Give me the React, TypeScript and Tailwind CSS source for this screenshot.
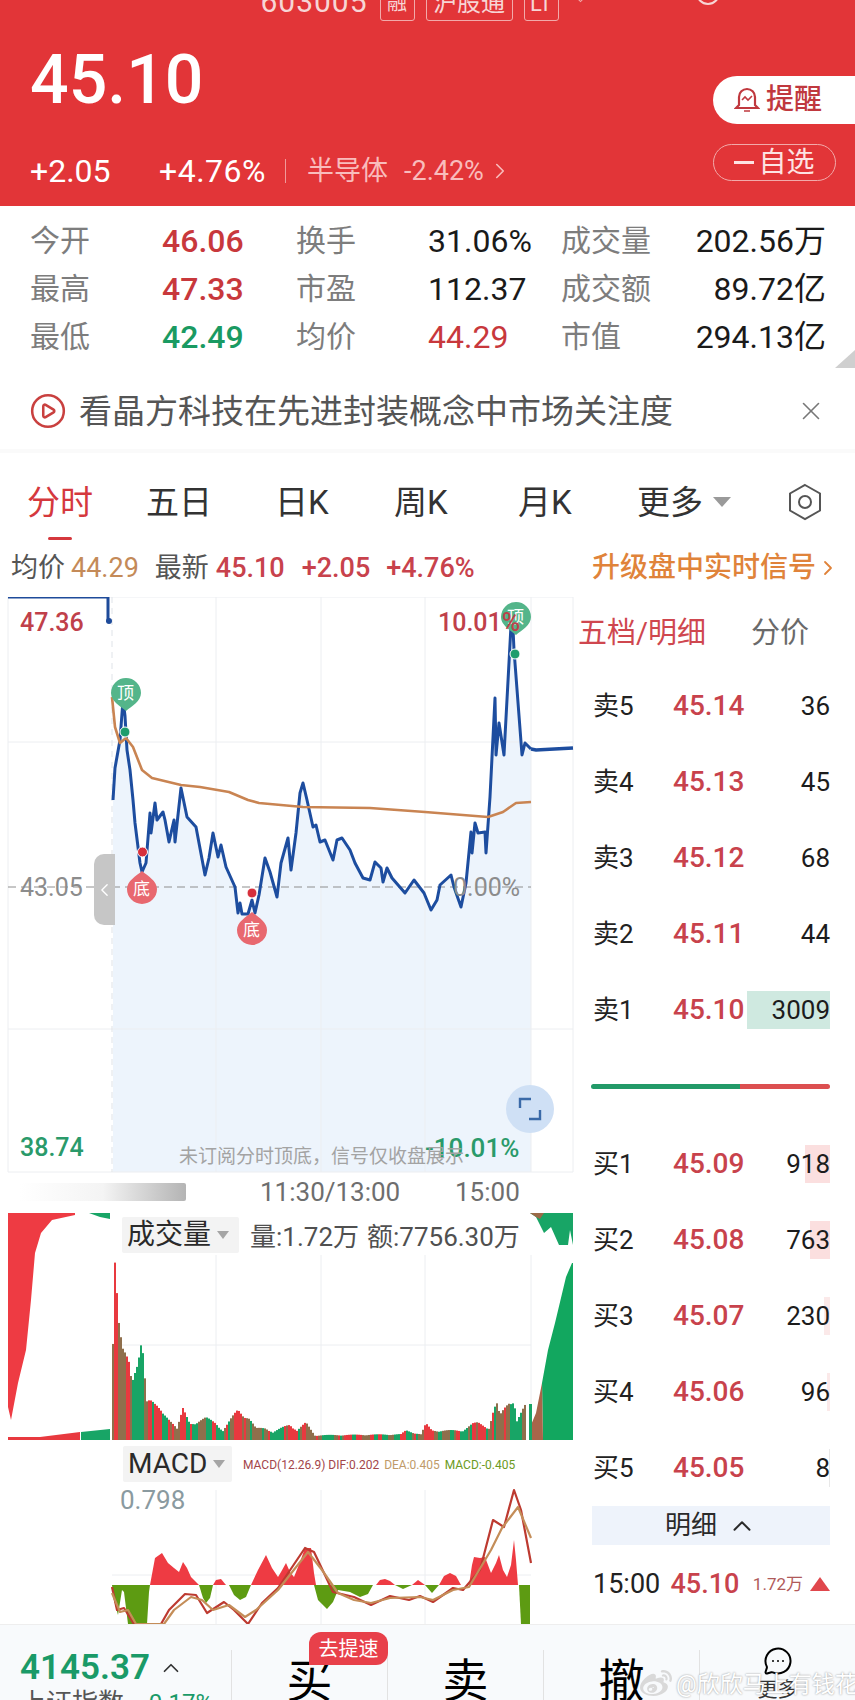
import { ChevronLeft, ChevronRight, ChevronUp, CirclePlay, MessageCircleMore, X } from "lucide-react";
import { FaWeibo } from "react-icons/fa";

type Pt = [number, number];

const font = { fontFamily: 'Roboto, "Noto Sans CJK SC", sans-serif' };

const stats = [
  [
    { label: "今开", value: "46.06", color: "text-[#c8383c]" },
    { label: "换手", value: "31.06%", color: "text-[#1a1a1a]" },
    { label: "成交量", value: "202.56万", color: "text-[#1a1a1a]" },
  ],
  [
    { label: "最高", value: "47.33", color: "text-[#c8383c]" },
    { label: "市盈", value: "112.37", color: "text-[#1a1a1a]" },
    { label: "成交额", value: "89.72亿", color: "text-[#1a1a1a]" },
  ],
  [
    { label: "最低", value: "42.49", color: "text-[#1a9a62]" },
    { label: "均价", value: "44.29", color: "text-[#c8383c]" },
    { label: "市值", value: "294.13亿", color: "text-[#1a1a1a]" },
  ],
];

const tabs = [
  { label: "分时", cls: "w-[119px] text-[#d5383d]" },
  { label: "五日", cls: "w-[129px]" },
  { label: "日K", cls: "w-[119px]" },
  { label: "周K", cls: "w-[124px]" },
  { label: "月K", cls: "w-[119px]" },
];

const sells = [
  { name: "卖5", price: "45.14", qty: "36" },
  { name: "卖4", price: "45.13", qty: "45" },
  { name: "卖3", price: "45.12", qty: "68" },
  { name: "卖2", price: "45.11", qty: "44" },
  { name: "卖1", price: "45.10", qty: "3009", bar: "w-[83px] bg-[#cfe9e0]" },
];

const buys = [
  { name: "买1", price: "45.09", qty: "918", bar: "w-[25px] bg-[#fbdfdf]" },
  { name: "买2", price: "45.08", qty: "763", bar: "w-[20px] bg-[#fbdfdf]" },
  { name: "买3", price: "45.07", qty: "230", bar: "w-[6px] bg-[#fbe9e9]" },
  { name: "买4", price: "45.06", qty: "96", bar: "w-[3px] bg-[#fbe9e9]" },
  { name: "买5", price: "45.05", qty: "8", bar: "w-[1px] bg-[#e8e8e8]" },
];

const price: Pt[] = [
  [113, 800], [115, 768], [120, 740], [123, 700], [125, 716], [127, 750], [130, 770], [133, 800], [135, 823], [140, 863], [142, 872], [146, 863],
  [150, 813], [151, 833], [155, 803], [157, 820], [163, 812], [165, 820], [169, 842], [174, 820], [175, 842], [181, 788], [187, 817], [196, 827],
  [205, 875], [209, 858], [213, 833], [218, 857], [221, 845], [226, 867], [235, 887], [238, 913], [240, 903], [242, 914], [248, 914], [252, 900],
  [255, 913], [259, 895], [265, 858], [270, 872], [277, 897], [281, 863], [288, 838], [291, 870], [296, 833], [300, 793], [303, 783], [307, 800],
  [313, 827], [316, 825], [320, 842], [325, 840], [333, 860], [337, 840], [342, 838], [350, 850], [355, 863], [363, 878], [370, 880], [375, 862],
  [381, 868], [383, 882], [387, 868], [392, 878], [405, 893], [414, 880], [424, 893], [431, 910], [437, 900], [440, 885], [451, 875], [454, 887],
  [461, 907], [466, 883], [471, 832], [472, 853], [475, 823], [478, 833], [485, 832], [486, 853], [490, 797], [495, 698], [496, 755], [499, 723],
  [504, 755], [512, 607], [514, 650], [522, 755], [525, 743], [531, 749],
];
const priceTail: Pt[] = [[531, 749], [536, 750], [573, 748]];

const avg: Pt[] = [
  [112, 697], [115, 727], [120, 743], [126, 738], [133, 747], [142, 770], [152, 778], [181, 785], [200, 787], [229, 792], [248, 800], [259, 803],
  [303, 807], [370, 808], [425, 812], [488, 817], [503, 812], [516, 803], [531, 802],
];

const volumeEnvelope: Pt[] = [
  [112, 97], [114, 183], [118, 130], [124, 100], [128, 82], [131, 57], [137, 77], [141, 108], [146, 47], [149, 45], [154, 37], [162, 27], [170, 22],
  [176, 12], [182, 32], [189, 17], [205, 23], [215, 18], [222, 10], [237, 32], [248, 23], [255, 12], [265, 13], [272, 8], [289, 17], [296, 10], [305, 18],
  [314, 5], [400, 6], [405, 10], [420, 6], [425, 17], [431, 10], [461, 10], [472, 17], [477, 18], [488, 13], [493, 33], [496, 37], [499, 25], [509, 43],
  [513, 43], [516, 20], [525, 37],
];

const dif: Pt[] = [
  [112, 1587], [117, 1610], [124, 1608], [134, 1624], [161, 1624], [169, 1610], [185, 1594], [196, 1595], [207, 1613], [224, 1602], [234, 1610], [248, 1624],
  [262, 1603], [278, 1588], [305, 1548], [314, 1552], [333, 1592], [354, 1597], [371, 1605], [390, 1596], [409, 1600], [420, 1596], [433, 1602], [453, 1588],
  [463, 1590], [480, 1570], [493, 1520], [504, 1527], [514, 1490], [521, 1510], [531, 1563],
];
const dea: Pt[] = [
  [112, 1593], [120, 1612], [128, 1610], [136, 1624], [164, 1624], [174, 1610], [191, 1597], [202, 1600], [213, 1610], [229, 1605], [245, 1617], [256, 1610],
  [278, 1590], [308, 1552], [322, 1570], [338, 1593], [354, 1600], [371, 1603], [390, 1598], [420, 1597], [433, 1600], [453, 1590], [469, 1587], [491, 1550],
  [502, 1528], [518, 1507], [531, 1538],
];

const macdRed: Pt[][] = [
  [[150, 1585], [155, 1558], [162, 1553], [168, 1563], [174, 1568], [179, 1572], [183, 1562], [187, 1568], [191, 1577], [199, 1585]],
  [[213, 1585], [216, 1580], [221, 1579], [226, 1585]],
  [[251, 1585], [258, 1570], [266, 1555], [272, 1568], [278, 1577], [281, 1572], [286, 1563], [290, 1572], [294, 1577], [300, 1562], [305, 1548], [311, 1548], [314, 1573], [316, 1585]],
  [[376, 1585], [380, 1580], [385, 1579], [390, 1581], [395, 1585]],
  [[412, 1585], [418, 1580], [425, 1585]],
  [[439, 1585], [444, 1576], [450, 1573], [456, 1576], [461, 1585]],
  [[469, 1585], [472, 1565], [474, 1557], [480, 1558], [485, 1557], [491, 1573], [496, 1563], [499, 1555], [503, 1570], [507, 1577], [511, 1565], [514, 1540], [516, 1560], [518, 1585]],
];
const macdGreen: Pt[][] = [
  [[112, 1585], [114, 1600], [118, 1615], [122, 1590], [124, 1592], [128, 1624], [147, 1624], [149, 1592], [150, 1585]],
  [[199, 1585], [203, 1598], [206, 1603], [210, 1598], [213, 1585]],
  [[229, 1585], [234, 1595], [240, 1600], [246, 1597], [251, 1585]],
  [[314, 1585], [318, 1600], [327, 1609], [333, 1602], [338, 1590], [350, 1592], [360, 1597], [368, 1594], [373, 1585]],
  [[395, 1585], [403, 1589], [412, 1585]],
  [[425, 1585], [432, 1593], [439, 1585]],
  [[519, 1585], [521, 1624], [530, 1624], [530, 1585]],
];

const toLine = (pts: Pt[]) => pts.map((p, i) => `${i ? "L" : "M"}${p[0]} ${p[1]}`).join(" ");
const toPoly = (pts: Pt[]) => pts.map((p) => p.join(",")).join(" ");

function volumeBars() {
  const bars: { x: number; h: number; color: string }[] = [];
  for (let x = 112; x < 526; x += 2) {
    let h = 5;
    for (let i = 0; i < volumeEnvelope.length - 1; i++) {
      const a = volumeEnvelope[i];
      const b = volumeEnvelope[i + 1];
      if (x >= a[0] && x <= b[0]) h = a[1] + ((b[1] - a[1]) * (x - a[0])) / (b[0] - a[0]);
    }
    const jitter = 0.82 + 0.18 * Math.abs(Math.sin(x * 1.7));
    const band = Math.floor(x / 9) + Math.floor(Math.sin(x / 6) * 2);
    const mod = ((band % 3) + 3) % 3;
    bars.push({ x, h: h * jitter, color: mod === 0 ? "#e8393f" : mod === 1 ? "#18a566" : "#8f6f4c" });
  }
  return bars;
}

function ChartCanvas() {
  const area = `${toLine(price)} L531 1172 L113 1172 Z`;
  return (
    <div className="relative h-[1027px] w-[578px] shrink-0">
      <svg className="block" width="578" height="1027" viewBox="0 597 578 1027" fill="none">
        <path d={area} fill="#edf4fc" />
        <g stroke="#eceef1" strokeWidth="1">
          <path d="M8 597H573M8 742H573M8 1029H573M8 1172H573" />
          <path d="M8 597V1172M216 597V1172M321 597V1172M425 597V1172M531 597V1172M573 597V1172" />
          <path d="M216 1255V1440M321 1255V1440M425 1255V1440M531 1255V1440M112 1345H531" />
          <path d="M216 1490V1624M321 1490V1624M425 1490V1624M112 1575H531" />
        </g>
        <path d="M112 597V1172" stroke="#dfe3e8" strokeDasharray="6 5" />
        <path d="M8 887H531" stroke="#8e8e8e" strokeDasharray="8 5" />
        <path d="M8 597H108L108 622" stroke="#1e4b9a" strokeWidth="3" />
        <circle cx="109" cy="621" r="3" fill="#1e4b9a" />
        <path d={toLine(price)} stroke="#1d4d9f" strokeWidth="3" strokeLinejoin="round" />
        <path d={toLine(priceTail)} stroke="#1d4d9f" strokeWidth="3.500" />
        <path d={toLine(avg)} stroke="#c98452" strokeWidth="2.600" strokeLinejoin="round" />

        {/* left and right volume wedges */}
        <polygon points={toPoly([[8, 1213], [75, 1213], [75, 1215], [52, 1220], [41, 1233], [35, 1253], [31, 1300], [26, 1350], [18, 1383], [11, 1420], [8, 1407]])} fill="#ee3b43" />
        <polygon points={toPoly([[89, 1213], [110, 1213], [110, 1219], [100, 1217]])} fill="#18a566" />
        <polygon points={toPoly([[8, 1437], [40, 1437], [80, 1432], [80, 1440], [8, 1440]])} fill="#e8393f" />
        <polygon points={toPoly([[81, 1432], [110, 1429], [110, 1440], [81, 1440]])} fill="#18a566" />
        <polygon points={toPoly([[572, 1263], [566, 1277], [555, 1323], [548, 1350], [542, 1383], [543, 1440], [573, 1440], [573, 1263]])} fill="#12a75f" />
        <polygon points={toPoly([[542, 1383], [536, 1413], [531, 1425], [531, 1440], [543, 1440]])} fill="#a8654a" />
        <polygon points={toPoly([[530, 1213], [573, 1213], [573, 1245], [570, 1230], [568, 1245], [559, 1245], [551, 1227], [544, 1233], [536, 1217]])} fill="#18a566" />
        <polygon points={toPoly([[530, 1213], [544, 1213], [540, 1219], [536, 1217]])} fill="#9a6a48" />
        {volumeBars().map((b) => (
          <rect key={b.x} x={b.x} y={1440 - b.h} width="2" height={b.h} fill={b.color} />
        ))}
        <rect x="529" y="1404" width="3" height="36" fill="#18a566" />

        {macdRed.map((p, i) => <polygon key={i} points={toPoly(p)} fill="#ee3b43" />)}
        {macdGreen.map((p, i) => <polygon key={i} points={toPoly(p)} fill="#5d9b12" />)}
        <path d={toLine(dif)} stroke="#bd3a30" strokeWidth="2.200" strokeLinejoin="round" />
        <path d={toLine(dea)} stroke="#c48d58" strokeWidth="2.200" strokeLinejoin="round" />

        {/* signal pins */}
        <path d="M111 693a15 15 0 1 1 30 0c0 8-9 13-15 18c-6-5-15-10-15-18Z" fill="#54b58a" />
        <circle cx="125" cy="732" r="5" fill="#1f9d6d" stroke="#fff" />
        <path d="M501 617a15 15 0 1 1 30 0c0 8-9 13-15 18c-6-5-15-10-15-18Z" fill="#54b58a" />
        <circle cx="515" cy="654" r="5" fill="#1f9d6d" stroke="#fff" />
        <path d="M127 889a15 15 0 1 0 30 0c0-8-9-13-15-18c-6 5-15 10-15 18Z" fill="#e8686f" />
        <circle cx="142.500" cy="852" r="5" fill="#d7303c" stroke="#fff" />
        <path d="M237 930a15 15 0 1 0 30 0c0-8-9-13-15-18c-6 5-15 10-15 18Z" fill="#e8686f" />
        <circle cx="252" cy="893" r="5" fill="#d7303c" stroke="#fff" />
      </svg>

      <div className="absolute left-[117px] top-[83px] text-[17px] leading-[26px] text-white">顶</div>
      <div className="absolute left-[507px] top-[7px] text-[17px] leading-[26px] text-white">顶</div>
      <div className="absolute left-[133px] top-[279px] text-[17px] leading-[26px] text-white">底</div>
      <div className="absolute left-[243px] top-[320px] text-[17px] leading-[26px] text-white">底</div>

      <div className="absolute left-[20px] top-[11px] text-[25px] font-medium leading-[30px] text-[#c0404a]">47.36</div>
      <div className="absolute left-[438px] top-[11px] text-[25px] font-medium leading-[30px] text-[#c0404a]">10.01%</div>
      <div className="absolute left-[20px] top-[276px] text-[25px] leading-[30px] text-[#8c8c8c]">43.05</div>
      <div className="absolute left-[453px] top-[276px] text-[25px] leading-[30px] text-[#8c8c8c]">0.00%</div>
      <div className="absolute left-[20px] top-[536px] text-[25px] font-medium leading-[30px] text-[#2a9a6a]">38.74</div>
      <div className="absolute left-[425px] top-[536px] text-[26px] font-medium leading-[30px] text-[#2a9a6a]">-10.01%</div>

      <div className="absolute left-[94px] top-[257px] flex h-[71px] w-[21px] items-center justify-center rounded-l-[10px] bg-[#c6c6c6]">
        <ChevronLeft size={22} strokeWidth={1.6} className="text-white" />
      </div>
      <div className="absolute left-[179px] top-[548px] whitespace-nowrap text-[19px] leading-[24px] text-[#a3a3a3]">未订阅分时顶底，信号仅收盘展示</div>
      <div className="absolute left-[506px] top-[488px] flex h-[48px] w-[48px] items-center justify-center rounded-full bg-[#cfe0f5]">
        <svg width="24" height="24" viewBox="0 0 24 24" fill="none" stroke="#3a6aa8" strokeWidth="2.400">
          <path d="M2 11V2h11M22 13v9H11" />
        </svg>
      </div>

      <div className="absolute left-[20px] top-[586px] h-[18px] w-[166px] rounded-r-[2px] bg-gradient-to-r from-white via-[#f4f4f4] to-[#b4b4b4]" />
      <div className="absolute left-[260px] top-[580px] text-[26px] leading-[30px] text-[#6e6e6e]">11:30/13:00</div>
      <div className="absolute left-[455px] top-[580px] text-[26px] leading-[30px] text-[#6e6e6e]">15:00</div>

      <div className="absolute left-[122px] top-[620px] flex h-[36px] w-[117px] items-center gap-[6px] rounded-[2px] bg-[#f3f3f3] pl-[5px] text-[28px] leading-none text-[#2a2a2a]">
        成交量
        <span className="h-0 w-0 border-x-[6px] border-t-[8px] border-x-transparent border-t-[#a5a5a5]" />
      </div>
      <div className="absolute left-[250px] top-[625px] whitespace-nowrap text-[26px] leading-[30px] text-[#505050]">量:1.72万</div>
      <div className="absolute left-[367px] top-[625px] whitespace-nowrap text-[26px] leading-[30px] text-[#505050]">额:7756.30万</div>

      <div className="absolute left-[123px] top-[849px] flex h-[36px] w-[109px] items-center gap-[6px] rounded-[2px] bg-[#f3f3f3] pl-[5px] text-[28px] leading-none text-[#2a2a2a]">
        MACD
        <span className="h-0 w-0 border-x-[6px] border-t-[8px] border-x-transparent border-t-[#a5a5a5]" />
      </div>
      <div className="absolute left-[243px] top-[860px] flex gap-[5px] whitespace-nowrap text-[12px] leading-[16px]">
        <span className="text-[#a2454a]">MACD(12.26.9) DIF:0.202</span>
        <span className="text-[#c09a68]">DEA:0.405</span>
        <span className="text-[#6b9a22]">MACD:-0.405</span>
      </div>
      <div className="absolute left-[120px] top-[888px] text-[26px] leading-[30px] text-[#8a9aa0]">0.798</div>
    </div>
  );
}

function QuoteRow({ name, price, qty, bar }: { name: string; price: string; qty: string; bar?: string }) {
  return (
    <div className="flex h-[76px] items-center">
      <div className="w-[95px] pl-[15px] text-[26px] text-[#222]">{name}</div>
      <div className="w-[74px] text-[28px] font-medium text-[#c8424c]">{price}</div>
      <div className="relative flex h-[38px] flex-1 items-center justify-end text-[26px] text-[#1c1c1c]">
        {bar && <div className={`absolute right-0 top-0 h-full ${bar}`} />}
        <span className="relative">{qty}</span>
      </div>
    </div>
  );
}

function OrderBook() {
  return (
    <div className="flex w-[277px] flex-col pr-[25px]">
      <div className="flex h-[74px] items-center whitespace-nowrap text-[29px]">
        <span className="text-[#cf474f]">五档/明细</span>
        <span className="ml-[45px] text-[#6a6a6a]">分价</span>
      </div>
      <div className="-mt-[3px]">
        {sells.map((r) => <QuoteRow key={r.name} {...r} />)}
      </div>
      <div className="ml-[13px] mt-[36px] flex h-[5px] overflow-hidden rounded-full">
        <div className="w-[149px] bg-[#229a68]" />
        <div className="flex-1 bg-[#dc4f50]" />
      </div>
      <div className="mt-[37px]">
        {buys.map((r) => <QuoteRow key={r.name} {...r} />)}
      </div>
      <div className="ml-[14px] flex h-[39px] items-center justify-center gap-[10px] bg-[#eef3fb] text-[26px] text-[#2a2a2a]">
        明细
        <ChevronUp size={30} strokeWidth={1.6} />
      </div>
      <div className="mt-[19px] flex items-center pl-[15px]">
        <span className="w-[78px] text-[27px] text-[#222]">15:00</span>
        <span className="w-[83px] text-[27px] font-medium text-[#c8424c]">45.10</span>
        <span className="whitespace-nowrap text-[17px] text-[#b05a5a]">1.72万</span>
        <span className="ml-[7px] h-0 w-0 border-x-[10px] border-b-[14px] border-x-transparent border-b-[#e0474c]" />
      </div>
    </div>
  );
}

export default function App() {
  return (
    <div className="relative h-[1700px] w-[855px] overflow-hidden bg-white" style={font}>
      <header className="h-[206px] overflow-hidden bg-[#e23538] text-white">
        <div className="relative -mt-[21px] flex h-[44px] items-center justify-center pr-[36px] text-[#f7d5d5]">
          <span className="text-[30px] tracking-[1px]">603005</span>
          <span className="ml-[12px] mt-[4px] flex h-[36px] w-[35px] items-center justify-center rounded-[3px] border border-[#f2aaaa] text-[20px]">融</span>
          <span className="ml-[11px] mt-[4px] flex h-[36px] w-[87px] items-center justify-center rounded-[3px] border border-[#f2aaaa] text-[24px]">沪股通</span>
          <span className="ml-[11px] mt-[4px] flex h-[36px] w-[35px] items-center justify-center rounded-[3px] border border-[#f2aaaa] text-[22px]">LT</span>
          <span className="absolute left-[575px] top-[10px] h-[11px] w-[11px] rotate-45 border border-[#f2aaaa]" />
          <span className="absolute left-[696px] top-[2px] h-[24px] w-[24px] rounded-full border-2 border-[#f7d5d5]" />
          <span className="absolute left-[812px] top-[14px] h-[2px] w-[8px] rotate-45 bg-[#f7d5d5]" />
        </div>
        <div className="flex justify-between pl-[30px]">
          <div>
            <div className="mt-[15px] text-[68px] font-medium leading-[84px]">45.10</div>
            <div className="mt-[31px] flex items-center text-[32px] leading-[36px]">
              <span className="w-[129px]">+2.05</span>
              <span className="w-[126px] tracking-[0.5px]">+4.76%</span>
              <span className="h-[24px] w-px bg-[#f09a9a]" />
              <span className="ml-[21px] text-[27px] text-[#f9bcbc]">半导体</span>
              <span className="ml-[16px] text-[27px] text-[#f9bcbc]">-2.42%</span>
              <ChevronRight size={26} strokeWidth={1.5} className="ml-[3px] text-[#f9bcbc]" />
            </div>
          </div>
          <div className="w-[142px] pt-[53px]">
            <div className="flex h-[48px] items-center gap-[6px] rounded-l-[24px] bg-white pl-[21px] text-[28px] font-medium text-[#c0383e]">
              <svg width="26" height="28" viewBox="0 0 26 28" fill="none" stroke="#c0383e" strokeWidth="2.200">
                <path d="M5 19V11a8 8 0 0 1 16 0v8l3 3H2l3-3Z" />
                <path d="M10 25h6M8 14l3-3 3 3 4-4" strokeWidth="1.600" />
              </svg>
              提醒
            </div>
            <div className="mt-[20px] flex h-[37px] w-[123px] items-center justify-center gap-[4px] rounded-[19px] border border-[#f2aaaa] text-[28px] text-[#fde3e3]">
              <span className="h-[3px] w-[20px] bg-[#fde3e3]" />
              自选
            </div>
          </div>
        </div>
      </header>

      <section className="relative pl-[30px] pt-[11px]">
        {stats.map((row, i) => (
          <div key={i} className="flex h-[48px] items-center text-[30px] leading-none">
            <span className="w-[132px] text-[#7d7d7d]">{row[0].label}</span>
            <span className={`w-[134px] text-[32px] font-medium ${row[0].color}`}>{row[0].value}</span>
            <span className="w-[132px] text-[#7d7d7d]">{row[1].label}</span>
            <span className={`w-[133px] whitespace-nowrap text-[32px] ${row[1].color}`}>{row[1].value}</span>
            <span className="w-[96px] text-[#7d7d7d]">{row[2].label}</span>
            <span className={`w-[169px] whitespace-nowrap text-right text-[32px] ${row[2].color}`}>{row[2].value}</span>
          </div>
        ))}
        <svg className="absolute right-0 top-[144px]" width="20" height="18" viewBox="0 0 20 18">
          <polygon points="20,0 20,18 0,18" fill="#cfcfcf" />
        </svg>
      </section>

      <div className="mt-[22px] flex h-[56px] items-center px-[29px]">
        <CirclePlay size={38} strokeWidth={1.6} className="text-[#c9403f]" />
        <span className="ml-[12px] flex-1 whitespace-nowrap text-[33px] leading-none text-[#555]">看晶方科技在先进封装概念中市场关注度</span>
        <X size={30} strokeWidth={1.3} className="text-[#777]" />
      </div>

      <div className="mt-[10px] h-[4px] bg-[#fafafa]" />

      <nav className="relative mt-[14px] flex h-[70px] items-center pl-[27px] text-[33px] leading-none text-[#333]">
        {tabs.map((t) => (
          <span key={t.label} className={`shrink-0 ${t.cls}`}>{t.label}</span>
        ))}
        <span className="text-[#333]">更多</span>
        <span className="ml-[10px] h-0 w-0 border-x-[9px] border-t-[10px] border-x-transparent border-t-[#9a9a9a]" />
        <svg className="ml-[56px]" width="36" height="38" viewBox="0 0 36 38" fill="none" stroke="#555" strokeWidth="2">
          <polygon points="18,2 33,10.500 33,27.500 18,36 3,27.500 3,10.500" />
          <circle cx="18" cy="19" r="6" />
        </svg>
        <span className="absolute bottom-[-3px] left-[48px] h-[3px] w-[24px] rounded-full bg-[#d5383d]" />
      </nav>

      <div className="mt-[2px] flex h-[58px] items-center pl-[11px] pr-[15px] text-[27px] leading-none">
        <span className="text-[#555]">均价</span>
        <span className="ml-[6px] text-[#c48a58]">44.29</span>
        <span className="ml-[16px] text-[#555]">最新</span>
        <span className="ml-[7px] font-medium text-[#c8424c]">45.10</span>
        <span className="ml-[17px] font-medium text-[#c8424c]">+2.05</span>
        <span className="ml-[16px] font-medium text-[#c8424c]">+4.76%</span>
        <span className="ml-auto flex items-center whitespace-nowrap text-[28px] font-medium text-[#e0833a]">
          升级盘中实时信号
          <ChevronRight size={24} strokeWidth={1.8} />
        </span>
      </div>

      <main className="flex h-[1027px] overflow-hidden">
        <ChartCanvas />
        <OrderBook />
      </main>

      <footer className="relative flex h-[76px] overflow-hidden border-t border-[#eeeeee] bg-[#f8fafc] pt-[25px] text-black">
        <div className="w-[232px] shrink-0 border-r border-[#e2e2e2] pl-[20px]">
          <div className="flex items-center gap-[8px] text-[35px] font-semibold leading-[36px] text-[#1a9a68]">
            4145.37
            <ChevronUp size={26} strokeWidth={1.6} className="text-[#333]" />
          </div>
          <div className="mt-[2px] flex items-center gap-[18px] text-[26px] leading-[30px] text-[#555]">
            上证指数
            <span className="text-[24px] text-[#1a9a68]">-0.17%</span>
          </div>
        </div>
        <div className="flex w-[156px] shrink-0 justify-center border-r border-[#e2e2e2] pt-[8px] text-[46px] leading-none">买</div>
        <div className="flex w-[156px] shrink-0 justify-center border-r border-[#e2e2e2] pt-[8px] text-[46px] leading-none">卖</div>
        <div className="flex w-[156px] shrink-0 justify-center border-r border-[#e2e2e2] pt-[8px] text-[46px] leading-none">撤</div>
        <div className="flex flex-1 flex-col items-center">
          <MessageCircleMore size={46} strokeWidth={1.6} className="-mt-[4px]" />
          <span className="mt-[4px] text-[20px] leading-none text-[#333]">更多</span>
        </div>
        <div className="absolute left-[309px] top-[7px] flex h-[33px] w-[79px] items-center justify-center rounded-[12px] rounded-bl-none bg-[#e8404a] text-[20px] text-white">去提速</div>
        <div className="absolute left-[640px] top-[43px] flex items-center gap-[4px] whitespace-nowrap text-[23px] leading-none text-white [text-shadow:0_0_2px_#8a8a8a]">
          <FaWeibo size={32} className="text-[#d9d9d9]" />
          @欣欣马上有钱花
        </div>
      </footer>
    </div>
  );
}
